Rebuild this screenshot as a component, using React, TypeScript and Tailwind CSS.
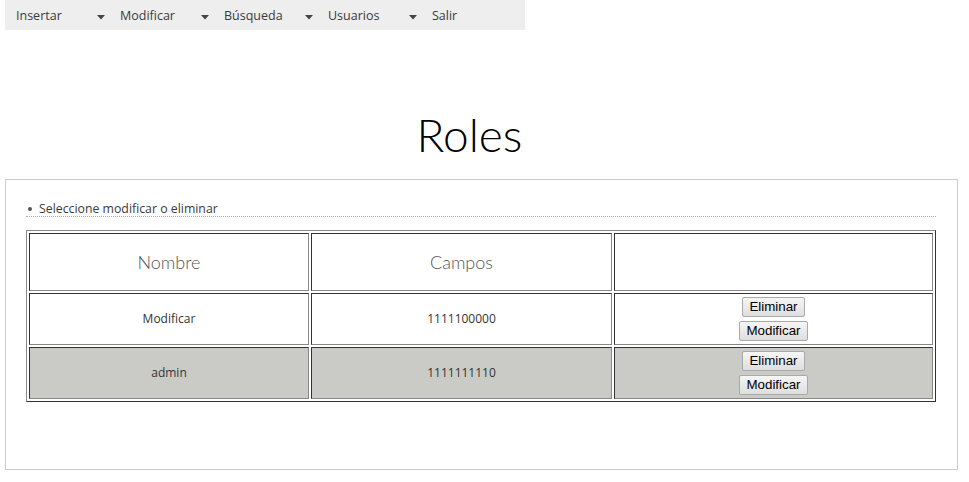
import React from "react";

const navItems = ["Insertar", "Modificar", "Búsqueda", "Usuarios", "Salir"];

function Caret() {
  return (
    <svg width="8" height="5" viewBox="0 0 8 5" className="block">
      <path d="M0 0 L8 0 L4 4.5 Z" fill="#444" />
    </svg>
  );
}

function Btn({ children }: { children: React.ReactNode }) {
  return (
    <button className="h-[20px] px-[6px] border border-[#a9a9a9] rounded-[2px] bg-gradient-to-b from-[#f6f6f6] to-[#dedede] text-[13.33px] leading-[18px] text-black font-['Liberation_Sans',Arial,sans-serif]">
      {children}
    </button>
  );
}

const cellBase =
  "border border-t-[#333] border-l-[#333] border-r-[#888] border-b-[#888] text-center align-middle";

export default function App() {
  const rows = [
    { name: "Modificar", campos: "1111100000", bg: "bg-white" },
    { name: "admin", campos: "1111111110", bg: "bg-[#cacbc6]" },
  ];
  return (
    <div className="w-[969px] h-[482px] bg-white font-['Open_Sans','Noto_Sans',sans-serif] text-[#333] overflow-hidden">
      <nav className="ml-[5px] w-[520px] h-[30px] bg-[#eeeeee] flex items-center pl-[11px] pt-[3px] text-[12.5px] text-[#3a3a3a]">
        {navItems.map((item, i) => (
          <div key={item} className="w-[104px] shrink-0 flex items-center">
            <span>{item}</span>
            {i < navItems.length - 1 && (
              <span className="ml-auto mr-[15px] mt-[1px]">
                <Caret />
              </span>
            )}
          </div>
        ))}
      </nav>
      <h1 className="mt-[72px] h-[77px] text-center pr-[30px] font-['Lato',sans-serif] font-light text-[46px] leading-[66px] text-black">
        Roles
      </h1>
      <div className="ml-[5px] w-[953px] h-[291px] border border-[#cccccc]">
        <div className="ml-[20px] mt-[21px] w-[910px] flex items-center border-b border-dotted border-[#aaaaaa] text-[12.3px] leading-[15px] text-[#3a3a3a]">
          <span className="ml-[2px] w-[4px] h-[4px] rounded-full bg-[#555] mt-[1px]" />
          <span className="ml-[7px]">Seleccione modificar o eliminar</span>
        </div>
        <table className="ml-[20px] mt-[13px] w-[910px] border-separate border-spacing-[2px] border border-t-[#888] border-l-[#888] border-r-[#333] border-b-[#333] text-[12px]">
          <thead>
            <tr>
              <th className={`${cellBase} h-[58px] w-[280px] font-['Lato',sans-serif] font-light text-[18px] text-[#555]`}>
                Nombre
              </th>
              <th className={`${cellBase} h-[58px] w-[301px] font-['Lato',sans-serif] font-light text-[18px] text-[#555]`}>
                Campos
              </th>
              <th className={`${cellBase} h-[58px]`}></th>
            </tr>
          </thead>
          <tbody>
            {rows.map((r) => (
              <tr key={r.name}>
                <td className={`${cellBase} h-[52px] ${r.bg}`}>{r.name}</td>
                <td className={`${cellBase} h-[52px] ${r.bg}`}>{r.campos}</td>
                <td className={`${cellBase} h-[52px] py-0 ${r.bg}`}>
                  <div className="flex flex-col items-center gap-[4px]">
                    <Btn>Eliminar</Btn>
                    <Btn>Modificar</Btn>
                  </div>
                </td>
              </tr>
            ))}
          </tbody>
        </table>
      </div>
    </div>
  );
}
